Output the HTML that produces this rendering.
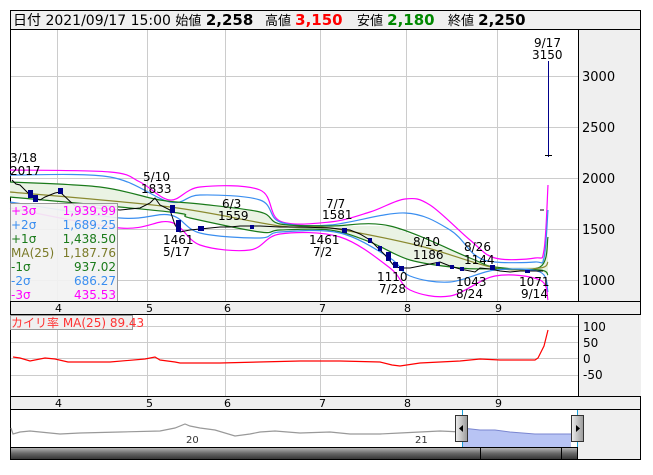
<!DOCTYPE html>
<html><head><meta charset="utf-8"><style>
body{margin:0;background:#fff;width:653px;height:470px;overflow:hidden;font-family:"Liberation Sans","Noto Sans CJK JP",sans-serif}
svg text{font-family:"DejaVu Sans","Liberation Sans","Noto Sans CJK JP",sans-serif}
</style></head><body>
<svg id="sv" width="653" height="470" viewBox="0 0 653 470" xmlns="http://www.w3.org/2000/svg">
<rect x="10.5" y="10.5" width="630" height="19" fill="#f0f0f0" stroke="#000"/>
<text x="13" y="25" font-size="14" fill="#000">日付 2021/09/17 15:00 <tspan font-size="13">始値</tspan> <tspan font-weight="bold" font-size="15">2,258</tspan></text>
<text x="265" y="25" font-size="13">高値 <tspan font-weight="bold" font-size="15" fill="#f00">3,150</tspan></text>
<text x="357" y="25" font-size="13">安値 <tspan font-weight="bold" font-size="15" fill="#080">2,180</tspan></text>
<text x="448" y="25" font-size="13">終値 <tspan font-weight="bold" font-size="15">2,250</tspan></text>
<rect x="10.5" y="29.5" width="568" height="272" fill="#fff" stroke="#000"/>
<rect x="579" y="30" width="62" height="271" fill="#efefef"/>
<line x1="578.5" y1="30" x2="578.5" y2="301" stroke="#000"/>
<line x1="640.5" y1="10" x2="640.5" y2="460" stroke="#000"/>
<g stroke="#ccc" stroke-width="1">
<line x1="57.5" y1="30" x2="57.5" y2="301"/><line x1="147.5" y1="30" x2="147.5" y2="301"/><line x1="225.5" y1="30" x2="225.5" y2="301"/><line x1="320.5" y1="30" x2="320.5" y2="301"/><line x1="406.5" y1="30" x2="406.5" y2="301"/><line x1="497.5" y1="30" x2="497.5" y2="301"/>
<line x1="11" y1="76.5" x2="578" y2="76.5"/><line x1="11" y1="127.5" x2="578" y2="127.5"/><line x1="11" y1="178.5" x2="578" y2="178.5"/><line x1="11" y1="229.5" x2="578" y2="229.5"/><line x1="11" y1="280.5" x2="578" y2="280.5"/>
</g>
<g font-size="13" fill="#000"><text x="582" y="81">3000</text><text x="582" y="132">2500</text><text x="582" y="183">2000</text><text x="582" y="234">1500</text><text x="582" y="285">1000</text></g>
<polygon fill="#eaf3e4" points="10,182 100,187 160,200 200,204 260,212 280,224 330,226 390,226 470,258 495,267 540,267 548,237 548,275 540,270 495,269 460,268 410,260 370,242 330,230 280,230 260,232 190,218 170,212 10,197"/>
<g fill="none" stroke-width="1.2">
<polyline class="s" stroke="#f0f" points="10,170 110,172 140,182 170,200 200,187 260,190 280,221 330,222 370,212 405,199 430,205 470,240 495,258 535,258 544,250 548,185"/>
<polyline class="s" stroke="#3a8ef0" points="10,175 110,177 170,202 200,195 260,200 280,222 330,225 405,213 450,230 475,255 495,262 535,262 544,258 548,210"/>
<polyline class="s" stroke="#1a7a1a" points="10,182 100,187 160,200 200,204 260,212 280,224 330,226 390,226 470,258 495,267 540,267 548,237"/>
<polyline class="s" stroke="#8a8a30" points="10,192 170,207 280,226 330,228 420,246 495,268 540,268 548,262"/>
<polyline class="s" stroke="#1a7a1a" points="10,197 170,212 190,218 260,232 280,230 330,230 370,242 410,260 460,268 495,269 540,270 548,275"/>
<polyline class="s" stroke="#3a8ef0" points="10,202 120,218 170,215 200,233 260,238 280,232 340,233 390,258 410,276 450,282 495,270 540,272 548,292"/>
<polyline class="s" stroke="#f0f" points="10,208 120,228 170,222 200,245 250,250 280,234 340,237 390,268 410,290 450,296 495,276 540,280 548,300"/>
<polyline stroke="#000" stroke-width="1" points="12,180 16,184 20,185 25,190 30,195 35,198 40,200 45,197 50,195 55,193 60,192 75,206 120,210 130,209 140,208 150,203 155,198 160,205 170,210 175,225 180,232 190,230 200,229 210,228 220,227 230,227 240,226 260,226 280,227 300,227 330,228 350,230 360,234 370,240 385,255 395,267 402,268 410,268 420,266 430,264 440,262 450,266 460,269 475,272 480,268 490,269 500,271 510,272 520,271 535,271 543,271"/>
</g>
<g fill="#00008b">
<rect x="28" y="190" width="5" height="8"/><rect x="33" y="195" width="5" height="7"/><rect x="58" y="188" width="5" height="6"/><rect x="170" y="205" width="5" height="8"/><rect x="176" y="220" width="5" height="12"/><rect x="198" y="226" width="6" height="5"/><rect x="250" y="225" width="4" height="4"/><rect x="342" y="228" width="5" height="5"/><rect x="368" y="238" width="4" height="5"/><rect x="378" y="246" width="4" height="5"/><rect x="386" y="252" width="5" height="9"/><rect x="393" y="262" width="5" height="6"/><rect x="399" y="266" width="5" height="5"/><rect x="436" y="262" width="4" height="4"/><rect x="450" y="265" width="4" height="4"/><rect x="460" y="267" width="4" height="4"/><rect x="490" y="265" width="5" height="5"/><rect x="525" y="270" width="5" height="3"/>
</g>
<line x1="548.5" y1="61" x2="548.5" y2="157" stroke="#00008b"/>
<line x1="545" y1="155.5" x2="552" y2="155.5" stroke="#000"/>
<line x1="540" y1="210" x2="544" y2="210" stroke="#000"/>
<g font-size="12" fill="#000">
<text x="10" y="162">3/18</text><text x="10" y="175">2017</text>
<text x="143" y="181">5/10</text><text x="141" y="193">1833</text>
<text x="222" y="208">6/3</text><text x="218" y="220">1559</text>
<text x="326" y="208">7/7</text><text x="322" y="219">1581</text>
<text x="163" y="244">1461</text><text x="163" y="256">5/17</text>
<text x="309" y="244">1461</text><text x="313" y="256">7/2</text>
<text x="413" y="246">8/10</text><text x="413" y="259">1186</text>
<text x="464" y="251">8/26</text><text x="464" y="264">1144</text>
<text x="377" y="281">1110</text><text x="379" y="293">7/28</text>
<text x="456" y="286">1043</text><text x="456" y="298">8/24</text>
<text x="519" y="286">1071</text><text x="521" y="298">9/14</text>
<text x="534" y="47">9/17</text><text x="532" y="59">3150</text>
</g>
<rect x="10.5" y="203.5" width="107" height="98" fill="#f2f2f2" fill-opacity="0.92" stroke="#999"/>
<g font-size="12">
<text x="11" y="215" fill="#f0f">+3σ</text><text x="116" y="215" fill="#f0f" text-anchor="end">1,939.99</text>
<text x="11" y="229" fill="#3a8ef0">+2σ</text><text x="116" y="229" fill="#3a8ef0" text-anchor="end">1,689.25</text>
<text x="11" y="243" fill="#1a7a1a">+1σ</text><text x="116" y="243" fill="#1a7a1a" text-anchor="end">1,438.50</text>
<text x="11" y="257" fill="#7a7a28">MA(25)</text><text x="116" y="257" fill="#7a7a28" text-anchor="end">1,187.76</text>
<text x="11" y="271" fill="#1a7a1a">-1σ</text><text x="116" y="271" fill="#1a7a1a" text-anchor="end">937.02</text>
<text x="11" y="285" fill="#3a8ef0">-2σ</text><text x="116" y="285" fill="#3a8ef0" text-anchor="end">686.27</text>
<text x="11" y="299" fill="#f0f">-3σ</text><text x="116" y="299" fill="#f0f" text-anchor="end">435.53</text>
</g>
<rect x="10.5" y="301.5" width="630" height="13" fill="#efefef" stroke="#000"/>
<g font-size="11"><text x="55" y="312">4</text><text x="146" y="312">5</text><text x="224" y="312">6</text><text x="319" y="312">7</text><text x="404" y="312">8</text><text x="495" y="312">9</text></g>
<rect x="10.5" y="314.5" width="568" height="82" fill="#fff" stroke="#000"/>
<rect x="579" y="315" width="62" height="82" fill="#efefef"/>
<g stroke="#ccc"><line x1="57.5" y1="315" x2="57.5" y2="396"/><line x1="147.5" y1="315" x2="147.5" y2="396"/><line x1="225.5" y1="315" x2="225.5" y2="396"/><line x1="320.5" y1="315" x2="320.5" y2="396"/><line x1="406.5" y1="315" x2="406.5" y2="396"/><line x1="497.5" y1="315" x2="497.5" y2="396"/>
<line x1="11" y1="326.5" x2="578" y2="326.5"/><line x1="11" y1="342.5" x2="578" y2="342.5"/><line x1="11" y1="358.5" x2="578" y2="358.5"/><line x1="11" y1="375.5" x2="578" y2="375.5"/></g>
<g font-size="12"><text x="583" y="331">100</text><text x="583" y="347">50</text><text x="583" y="363">0</text><text x="583" y="379">-50</text></g>
<polyline fill="none" stroke="#f00" stroke-width="1.2" points="13,357 20,358 30,361 45,358 55,359 68,362 110,362 145,359 155,357 160,360 175,362 180,363 220,363 300,361 340,361 380,362 392,365 400,366 420,363 460,361 480,359 500,360 535,360 538,358 544,346 548,330"/>
<rect x="10.5" y="315.5" width="122" height="14" fill="#f0f0f0" stroke="#999"/>
<text x="11" y="327" font-size="12" fill="#f33">カイリ率 MA(25)  89.43</text>
<rect x="10.5" y="396.5" width="630" height="13" fill="#efefef" stroke="#000"/>
<g font-size="11"><text x="55" y="407">4</text><text x="146" y="407">5</text><text x="224" y="407">6</text><text x="319" y="407">7</text><text x="404" y="407">8</text><text x="495" y="407">9</text></g>
<rect x="10.5" y="409.5" width="630" height="50" fill="#efefef" stroke="#000"/>
<rect x="11" y="410" width="567" height="38" fill="#fff"/>
<polygon fill="#b8c4f4" points="462,428 480,430 495,430 510,432 535,434 571,434 571,447 462,447"/>
<polyline fill="none" stroke="#999" stroke-width="1.2" points="11,428 13,434 20,432 30,431 40,432 60,434 80,433 120,432 160,431 175,428 185,424 190,426 200,428 215,430 235,436 250,434 260,432 275,431 300,433 330,432 350,434 380,434 400,433 420,432 440,431 462,432"/>
<polyline fill="none" stroke="#7a86d0" stroke-width="1" points="462,428 480,430 495,430 510,432 535,434 571,434"/>
<line x1="462.5" y1="410" x2="462.5" y2="448" stroke="#1aa0d8"/><line x1="577.5" y1="410" x2="577.5" y2="448" stroke="#1aa0d8"/>
<text x="186" y="443" font-size="10" fill="#333">20</text><text x="415" y="443" font-size="10" fill="#333">21</text>
<defs><linearGradient id="g" x1="0" y1="0" x2="0" y2="1"><stop offset="0" stop-color="#bbb"/><stop offset="0.5" stop-color="#666"/><stop offset="1" stop-color="#333"/></linearGradient>
<linearGradient id="h" x1="0" y1="0" x2="1" y2="0"><stop offset="0" stop-color="#eee"/><stop offset="1" stop-color="#999"/></linearGradient></defs>
<rect x="10.5" y="447.5" width="567" height="12" fill="url(#g)" stroke="#000"/>
<line x1="480.5" y1="448" x2="480.5" y2="460" stroke="#000"/><line x1="561.5" y1="448" x2="561.5" y2="460" stroke="#000"/>
<rect x="455.5" y="415.5" width="12" height="26" fill="url(#h)" stroke="#333"/>
<polygon points="463,425 459,428.5 463,432" fill="#000"/>
<rect x="571.5" y="415.5" width="12" height="26" fill="url(#h)" stroke="#333"/>
<polygon points="576,425 580,428.5 576,432" fill="#000"/>
</svg>
<script>
document.querySelectorAll('polyline.s').forEach(function(pl){
  var p=pl.getAttribute('points').trim().split(/\s+/).map(function(s){return s.split(',').map(Number);});
  var d='M'+p[0][0]+','+p[0][1];
  for(var i=0;i<p.length-1;i++){
    var p0=p[i-1]||p[i],p1=p[i],p2=p[i+1],p3=p[i+2]||p2;
    var c1x=p1[0]+(p2[0]-p0[0])/6,c1y=p1[1]+(p2[1]-p0[1])/6,c2x=p2[0]-(p3[0]-p1[0])/6,c2y=p2[1]-(p3[1]-p1[1])/6;
    d+=' C'+c1x+','+c1y+' '+c2x+','+c2y+' '+p2[0]+','+p2[1];
  }
  var path=document.createElementNS('http://www.w3.org/2000/svg','path');
  path.setAttribute('d',d);path.setAttribute('stroke',pl.getAttribute('stroke'));
  path.setAttribute('fill','none');path.setAttribute('stroke-width','1.2');
  pl.parentNode.replaceChild(path,pl);
});
</script>
</body></html>
